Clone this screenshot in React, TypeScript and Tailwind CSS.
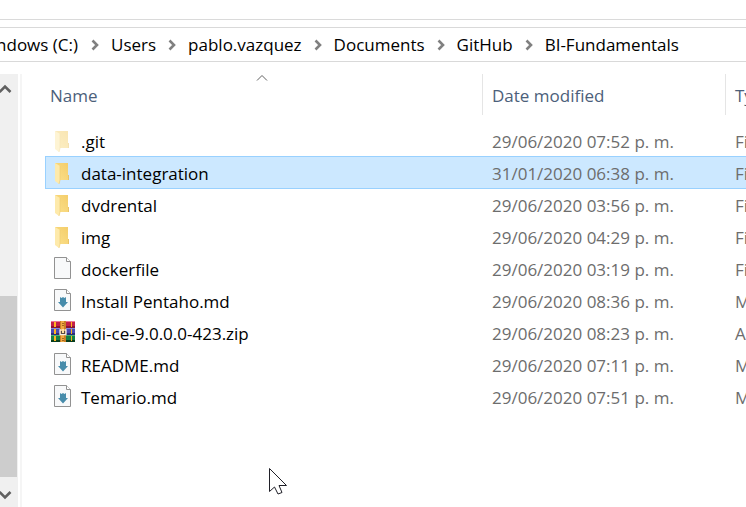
type Kind = "hidden" | "folder" | "file" | "md" | "zip";

type Entry = { name: string; date: string; type: string; kind: Kind; selected?: boolean };

const entries: Entry[] = [
  { name: ".git", date: "29/06/2020 07:52 p. m.", type: "File folder", kind: "hidden" },
  { name: "data-integration", date: "31/01/2020 06:38 p. m.", type: "File folder", kind: "folder", selected: true },
  { name: "dvdrental", date: "29/06/2020 03:56 p. m.", type: "File folder", kind: "folder" },
  { name: "img", date: "29/06/2020 04:29 p. m.", type: "File folder", kind: "folder" },
  { name: "dockerfile", date: "29/06/2020 03:19 p. m.", type: "File", kind: "file" },
  { name: "Install Pentaho.md", date: "29/06/2020 08:36 p. m.", type: "MD File", kind: "md" },
  { name: "pdi-ce-9.0.0.0-423.zip", date: "29/06/2020 08:23 p. m.", type: "Archive", kind: "zip" },
  { name: "README.md", date: "29/06/2020 07:11 p. m.", type: "MD File", kind: "md" },
  { name: "Temario.md", date: "29/06/2020 07:51 p. m.", type: "MD File", kind: "md" },
];

const crumbs = ["Users", "pablo.vazquez", "Documents", "GitHub", "BI-Fundamentals"];

function FolderIcon({ faded }: { faded?: boolean }) {
  return (
    <svg viewBox="0 0 24 24" className={faded ? "size-6 opacity-50" : "size-6"} aria-hidden="true">
      <defs>
        <linearGradient id="folder-back" x1="0" y1="1" x2="1" y2="0">
          <stop offset="0" stopColor="#fbe08b" />
          <stop offset="1" stopColor="#f4cd69" />
        </linearGradient>
      </defs>
      <path d="M4 2h13v12h1v5H8z" fill="url(#folder-back)" />
      <path d="M17 14h1v5h-1z" fill="#e9c46a" />
      <path d="M4 2l5 3v14l-1 4-4-3z" fill="#feeaab" />
      <path d="M9 5v14l-1 4" fill="none" stroke="#f1cf74" strokeWidth=".7" />
    </svg>
  );
}

function PageIcon({ arrow }: { arrow?: boolean }) {
  return (
    <svg viewBox="0 1 24 24" className="size-6" aria-hidden="true">
      <path d="M3.500 1.500h12l4 4v17h-16z" fill="#f8f9fa" stroke="#929292" />
      <path d="M15.500 1.500v4h4" fill="#fff" stroke="#929292" />
      {arrow && (
        <path d="M9 9l1.500 1L12 9l1.500 1L15 9v5h2l-5 5.500L7 14h2z" fill="#478cab" />
      )}
    </svg>
  );
}

function ZipIcon() {
  return (
    <svg viewBox="0 2 24 24" className="size-6" aria-hidden="true">
      <path d="M0 2h24v6H0z" fill="#c31f49" />
      <path d="M0 2h24v1H0z" fill="#ee7895" />
      <path d="M0 7h24v2H0z" fill="#8a1535" />
      <path d="M0 9h24v6H0z" fill="#494bb3" />
      <path d="M0 9h24v1H0z" fill="#8589dc" />
      <path d="M0 14h24v2H0z" fill="#2d2d78" />
      <path d="M0 16h24v6H0z" fill="#168045" />
      <path d="M0 16h24v1H0z" fill="#48b272" />
      <path d="M0 21h24v2H0z" fill="#083d1c" />
      <path d="M3 3h2v5H3zM3 10h2v5H3zM3 17h2v5H3zM20 3h1v5h-1zM20 10h1v5h-1zM20 17h1v5h-1z" fill="#ffb51f" />
      <path d="M9 2h6v21H9z" fill="#c98028" />
      <path d="M10 2h3v21h-3z" fill="#f0aa44" />
      <path d="M11 4.500h2m-2 2h2m-2 13h2m-2 2h2" stroke="#a3661f" />
      <path d="M9 15.500v-4.500h1.500M15 15.500v-4.500h-1.500M8.500 15.500h7" fill="none" stroke="#f5efe4" strokeWidth="1.300" />
      <path d="M10 12h4v3h-4z" fill="#594b45" />
      <path d="M11 10h2v4h-2z" fill="#ffe2a6" />
    </svg>
  );
}

function EntryIcon({ kind }: { kind: Kind }) {
  if (kind === "zip") return <ZipIcon />;
  if (kind === "file") return <PageIcon />;
  if (kind === "md") return <PageIcon arrow />;
  return <FolderIcon faded={kind === "hidden"} />;
}

function CrumbArrow() {
  return (
    <svg viewBox="0 0 8 12" className="h-3 w-2 shrink-0" aria-hidden="true">
      <path d="M1.500 1.500L6 6l-4.500 4.500" fill="none" stroke="#808080" strokeWidth="2.600" />
    </svg>
  );
}

function ScrollArrow({ down }: { down?: boolean }) {
  return (
    <svg viewBox="0 0 14 10" className="h-2.5 w-3.5 shrink-0" aria-hidden="true">
      <path d={down ? "M1.500 2L7 7.500 12.500 2" : "M1.500 8L7 2.500 12.500 8"} fill="none" stroke="#606060" strokeWidth="2.600" />
    </svg>
  );
}

export default function App() {
  return (
    <div className="flex h-screen flex-col overflow-hidden bg-white font-['Open_Sans','Noto_Sans',sans-serif] text-[17px] leading-6 text-black">
      <div className="h-5 shrink-0 border-b border-[#dadada]" />
      <nav aria-label="Path" className="mt-[7px] flex h-[35px] shrink-0 items-center border-y border-[#d9d9d9] whitespace-nowrap">
        <div className="flex w-[79px] shrink-0 justify-end overflow-hidden pr-px">
          <a href="#drive">Windows (C:)</a>
        </div>
        {crumbs.map((crumb) => (
          <div key={crumb} className="ml-3 flex items-center gap-3">
            <CrumbArrow />
            <a href={`#${crumb}`}>{crumb}</a>
          </div>
        ))}
      </nav>

      <div className="mt-3 flex min-h-0 flex-1">
        <div className="flex w-[18px] shrink-0 flex-col bg-[#f0f0f0]">
          <button type="button" aria-label="Scroll up" className="flex h-[30px] shrink-0 items-center justify-center pr-2">
            <ScrollArrow />
          </button>
          <div className="flex min-h-0 flex-1 flex-col justify-end">
            <div className="mr-px h-[181px] bg-[#cdcdcd]" />
          </div>
          <button type="button" aria-label="Scroll down" className="flex h-[30px] shrink-0 items-center justify-center pt-1.5 pr-2">
            <ScrollArrow down />
          </button>
        </div>

        <main className="ml-0.5 min-w-0 flex-1 overflow-hidden border-l-2 border-[#f5f5f5] pl-[23px]">
          <table className="w-full min-w-[900px] table-fixed border-separate border-spacing-0 text-left whitespace-nowrap">
            <colgroup>
              <col className="w-[438px]" />
              <col className="w-[243px]" />
              <col />
            </colgroup>
            <thead className="text-[#4c607a]">
              <tr className="h-[41px]">
                <th aria-sort="ascending" className="relative border-r border-[#e5e5e5] p-0 pt-0.5 pl-[5px] font-normal">
                  <button type="button">Name</button>
                  <svg viewBox="0 0 12 7" className="absolute top-0 left-1/2 h-[7px] w-3 -translate-x-2" aria-hidden="true">
                    <path d="M1 6.500l5-5 5 5" fill="none" stroke="#606060" />
                  </svg>
                </th>
                <th className="border-r border-[#e5e5e5] p-0 pt-0.5 pl-[9px] font-normal">
                  <button type="button">Date modified</button>
                </th>
                <th className="p-0 pt-0.5 pl-[9px] font-normal">
                  <button type="button">Type</button>
                </th>
              </tr>
            </thead>
            <tbody className="before:block before:h-2.5">
              {entries.map((entry) => (
                <tr
                  key={entry.name}
                  aria-selected={entry.selected}
                  className={
                    entry.selected
                      ? "h-8 bg-[#cce8ff] shadow-[0_-1px_0_#99d1ff,inset_0_-1px_0_#99d1ff,inset_1px_0_0_#99d1ff]"
                      : "h-8"
                  }
                >
                  <td className="p-0 pl-1.5">
                    <div className="flex items-center gap-1.5">
                      <EntryIcon kind={entry.kind} />
                      <span className="pt-0.5">{entry.name}</span>
                    </div>
                  </td>
                  <td className="p-0 pt-0.5 pl-[9px] text-[#6d6d6d]">{entry.date}</td>
                  <td className="p-0 pt-0.5 pl-[9px] text-[#6d6d6d]">{entry.type}</td>
                </tr>
              ))}
            </tbody>
          </table>
        </main>
      </div>

      <svg viewBox="0 0 20 28" className="pointer-events-none absolute top-[467px] left-[268px] h-7 w-5" aria-hidden="true">
        <path d="M1.500 1.500v23l5-4.500 3.500 7 4-1.500-3-7h7.500z" fill="#fff" stroke="#202028" />
      </svg>
    </div>
  );
}
